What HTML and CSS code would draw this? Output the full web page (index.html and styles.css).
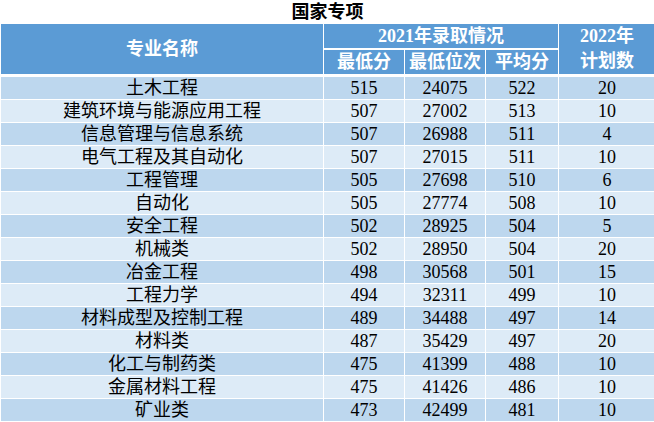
FILE: index.html
```html
<!DOCTYPE html>
<html lang="zh-CN">
<head>
<meta charset="utf-8">
<title>国家专项</title>
<link rel="stylesheet" href="styles.css">
</head>
<body>
<div class="page">
  <div class="title">国家专项</div>
  <div class="head">
    <div class="hc name">专业名称</div>
    <div class="hc y2021">2021年录取情况</div>
    <div class="hc plan">2022年<br>计划数</div>
    <div class="hc">最低分</div>
    <div class="hc">最低位次</div>
    <div class="hc">平均分</div>
  </div>
  <div class="body">
    <div class="row dark"><div class="c">土木工程</div><div class="c">515</div><div class="c">24075</div><div class="c">522</div><div class="c">20</div></div>
    <div class="row light"><div class="c">建筑环境与能源应用工程</div><div class="c">507</div><div class="c">27002</div><div class="c">513</div><div class="c">10</div></div>
    <div class="row dark"><div class="c">信息管理与信息系统</div><div class="c">507</div><div class="c">26988</div><div class="c">511</div><div class="c">4</div></div>
    <div class="row light"><div class="c">电气工程及其自动化</div><div class="c">507</div><div class="c">27015</div><div class="c">511</div><div class="c">10</div></div>
    <div class="row dark"><div class="c">工程管理</div><div class="c">505</div><div class="c">27698</div><div class="c">510</div><div class="c">6</div></div>
    <div class="row light"><div class="c">自动化</div><div class="c">505</div><div class="c">27774</div><div class="c">508</div><div class="c">10</div></div>
    <div class="row dark"><div class="c">安全工程</div><div class="c">502</div><div class="c">28925</div><div class="c">504</div><div class="c">5</div></div>
    <div class="row light"><div class="c">机械类</div><div class="c">502</div><div class="c">28950</div><div class="c">504</div><div class="c">20</div></div>
    <div class="row dark"><div class="c">冶金工程</div><div class="c">498</div><div class="c">30568</div><div class="c">501</div><div class="c">15</div></div>
    <div class="row light"><div class="c">工程力学</div><div class="c">494</div><div class="c">32311</div><div class="c">499</div><div class="c">10</div></div>
    <div class="row dark"><div class="c">材料成型及控制工程</div><div class="c">489</div><div class="c">34488</div><div class="c">497</div><div class="c">14</div></div>
    <div class="row light"><div class="c">材料类</div><div class="c">487</div><div class="c">35429</div><div class="c">497</div><div class="c">20</div></div>
    <div class="row dark"><div class="c">化工与制药类</div><div class="c">475</div><div class="c">41399</div><div class="c">488</div><div class="c">10</div></div>
    <div class="row light"><div class="c">金属材料工程</div><div class="c">475</div><div class="c">41426</div><div class="c">486</div><div class="c">10</div></div>
    <div class="row dark"><div class="c">矿业类</div><div class="c">473</div><div class="c">42499</div><div class="c">481</div><div class="c">10</div></div>
  </div>
</div>
</body>
</html>
```
FILE: styles.css
```css
html, body {
  margin: 0;
  padding: 0;
  background: #ffffff;
  overflow: hidden;
}
.page {
  width: 654px;
  height: 422px;
  overflow: hidden;
  font-family: "Liberation Serif", "Noto Sans CJK SC", serif;
  font-size: 18px;
  color: #000000;
}
.title {
  height: 24px;
  line-height: 24px;
  text-align: center;
  font-weight: bold;
  font-size: 18px;
  padding-left: 1px;
}
.head {
  display: grid;
  grid-template-columns: 322px 80px 80px 72px 96px;
  grid-template-rows: 24px 24px;
  column-gap: 1px;
  row-gap: 2px;
  padding-left: 1px;
  width: 655px;
}
.hc {
  background: #5b9bd5;
  color: #ffffff;
  font-weight: bold;
  display: flex;
  align-items: center;
  justify-content: center;
  text-align: center;
  line-height: 25px;
}
.name {
  grid-column: 1;
  grid-row: 1 / span 2;
}
.y2021 {
  grid-column: 2 / span 3;
  grid-row: 1;
}
.plan {
  grid-column: 5;
  grid-row: 1 / span 2;
}
.body {
  margin-top: 3px;
  display: flex;
  flex-direction: column;
  gap: 1px;
}
.row {
  display: grid;
  grid-template-columns: 322px 80px 80px 72px 96px;
  column-gap: 1px;
  height: 22px;
  padding-left: 1px;
  width: 655px;
}
.c {
  display: flex;
  align-items: center;
  justify-content: center;
  line-height: 22px;
  white-space: nowrap;
}
.dark .c {
  background: #bdd7ee;
}
.light .c {
  background: #ddebf7;
}
```
